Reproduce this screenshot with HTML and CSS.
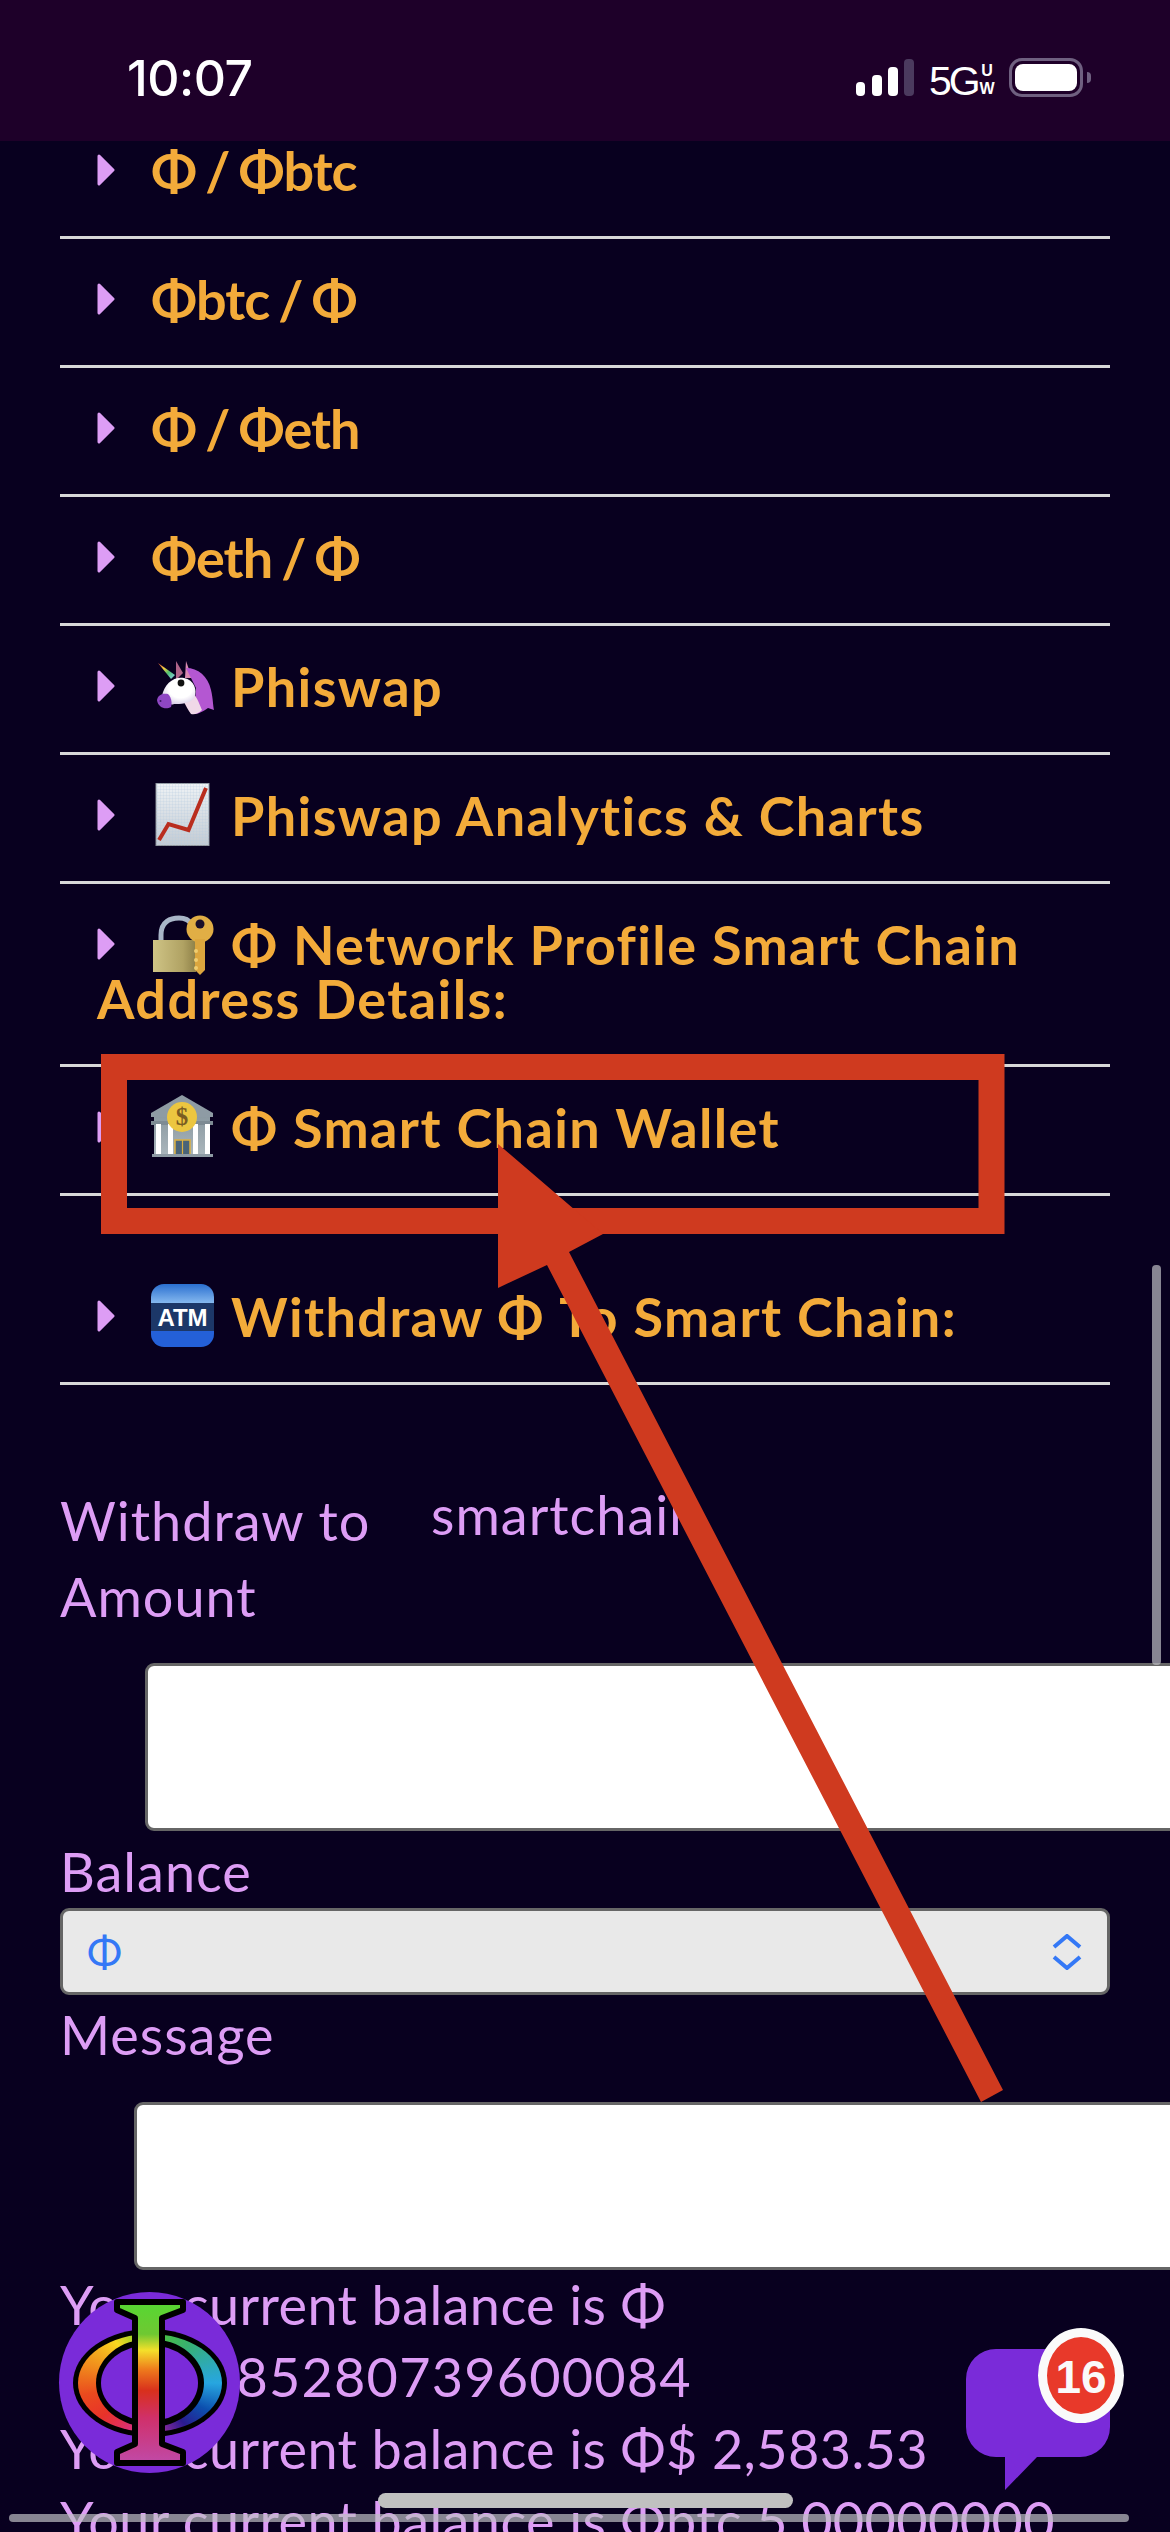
FILE: index.html

```html
<!DOCTYPE html>
<html lang="en">
<head>
  <meta charset="UTF-8">
  <meta name="viewport" content="width=device-width, initial-scale=1.0">
  <title>Smart Chain Wallet</title>
  <link rel="stylesheet" href="styles.css">
</head>
<body>
  <svg class="defs" width="0" height="0">
    <symbol id="tri" viewBox="0 0 18 32">
      <path d="M2 2 L16 16 L2 30 Z" fill="#dd9df5" stroke="#dd9df5" stroke-width="3" stroke-linejoin="round"/>
    </symbol>
  </svg>

  <div class="page">
    <header class="status">
      <span class="time">10:07</span>
      <div class="status-right">
        <svg class="signal" width="58" height="37" viewBox="0 0 58 37">
          <rect x="0" y="23" width="9" height="14" rx="4" fill="#fff"/>
          <rect x="16" y="16" width="10" height="21" rx="4" fill="#fff"/>
          <rect x="32" y="8" width="10" height="29" rx="4" fill="#fff"/>
          <rect x="48" y="0" width="10" height="37" rx="4" fill="#4b3a5e"/>
        </svg>
        <span class="net">5G</span>
        <span class="uw"><span>U</span><span>W</span></span>
        <div class="battery"><div class="battery-fill"></div></div>
        <div class="battery-nub"></div>
      </div>
    </header>

    <main class="content">
      <details class="row first pair">
        <summary><svg class="tri"><use href="#tri"/></svg>Φ / Φbtc</summary>
      </details>
      <details class="row pair">
        <summary><svg class="tri"><use href="#tri"/></svg>Φbtc / Φ</summary>
      </details>
      <details class="row pair">
        <summary><svg class="tri"><use href="#tri"/></svg>Φ / Φeth</summary>
      </details>
      <details class="row pair">
        <summary><svg class="tri"><use href="#tri"/></svg>Φeth / Φ</summary>
      </details>

      <details class="row">
        <summary><svg class="tri"><use href="#tri"/></svg><svg class="emoji" viewBox="0 0 63 63">
            <defs>
              <linearGradient id="horn" x1="0" y1="0" x2="1" y2="1">
                <stop offset="0" stop-color="#e0503a"/><stop offset=".35" stop-color="#f0d040"/>
                <stop offset=".6" stop-color="#50c070"/><stop offset="1" stop-color="#8fd0f0"/>
              </linearGradient>
              <radialGradient id="uni" cx=".55" cy=".4" r=".7">
                <stop offset=".5" stop-color="#fff"/><stop offset="1" stop-color="#cdbfe0"/>
              </radialGradient>
            </defs>
            <g transform="translate(5 6)">
              <path d="M2 3 L19 15 L15 19 Z" fill="url(#horn)"/>
              <path d="M20 20 L20 1 L27 13 Z" fill="#b0648a"/>
              <path d="M29 18 L30 1 L36 18 Z" fill="#d98ab0"/>
              <path d="M30 8 C42 8 52 16 55 30 C57 38 57 46 58 50 L52 48 C46 52 42 54 38 54 L40 28 Z" fill="#b457d2"/>
              <path d="M36 32 C42 38 44 46 46 50 C42 54 38 55 35 54 C32 50 30 46 28 42 Z" fill="#f0d8e8"/>
              <path d="M6 36 C8 24 18 16 28 18 C38 20 42 30 38 38 C34 44 24 44 18 44 C14 46 8 42 6 36 Z" fill="url(#uni)"/>
              <path d="M1 40 C2 34 8 33 12 34 C16 38 16 44 15 47 C10 50 2 48 1 40 Z" fill="#8f47c4"/>
              <circle cx="25" cy="23" r="3.4" fill="#111"/>
              <circle cx="4.500" cy="41" r="1" fill="#3b1a60"/>
            </g>
          </svg>Phiswap</summary>
      </details>

      <details class="row">
        <summary><svg class="tri"><use href="#tri"/></svg><svg class="emoji" viewBox="0 0 63 63">
            <defs>
              <linearGradient id="paper" x1="0" y1="0" x2="0" y2="1">
                <stop offset="0" stop-color="#eef2f5"/><stop offset="1" stop-color="#c3cbd3"/>
              </linearGradient>
              <pattern id="grid" width="3" height="3" patternUnits="userSpaceOnUse">
                <path d="M0 0H3M0 0V3" stroke="#b9cbe0" stroke-width=".5"/>
              </pattern>
            </defs>
            <rect x="5" y="0.500" width="53" height="62" fill="url(#paper)" stroke="#8d949b"/>
            <rect x="5" y="0.500" width="53" height="62" fill="url(#grid)"/>
            <path d="M8 57 L17.500 41 L37.500 47 L55 5" fill="none" stroke="#b92d1e" stroke-width="4"/>
          </svg>Phiswap Analytics &amp; Charts</summary>
      </details>

      <details class="row">
        <summary><svg class="tri"><use href="#tri"/></svg><svg class="emoji" viewBox="0 0 63 63">
            <defs>
              <linearGradient id="brass" x1="0" y1="0" x2="1" y2="0">
                <stop offset="0" stop-color="#cfc486"/><stop offset=".7" stop-color="#b0a263"/><stop offset="1" stop-color="#8e8048"/>
              </linearGradient>
            </defs>
            <g transform="translate(2 3)">
              <path d="M8 28 V20 C8 6 18 3 26 3 C32 3 36 5 38 9" fill="none" stroke="#a9b6c8" stroke-width="5"/>
              <rect x="0" y="25" width="43" height="32" fill="url(#brass)"/>
              <circle cx="47" cy="14" r="13.500" fill="#e1ae45"/>
              <circle cx="47" cy="9" r="4.500" fill="#1a0f2a"/>
              <path d="M42 24 H52 V55 L47 60 L42 55 Z" fill="#dca63e"/>
              <circle cx="43" cy="36" r="2" fill="#f0cd70"/><circle cx="43" cy="45" r="2" fill="#f0cd70"/><circle cx="43" cy="53" r="2" fill="#f0cd70"/>
            </g>
          </svg>Φ Network Profile Smart Chain Address Details:</summary>
      </details>

      <details class="row">
        <summary><svg class="tri"><use href="#tri"/></svg><svg class="emoji" viewBox="0 0 63 63">
            <defs>
              <linearGradient id="stone" x1="0" y1="0" x2="0" y2="1">
                <stop offset="0" stop-color="#8c9aa2"/><stop offset="1" stop-color="#a9b5bb"/>
              </linearGradient>
            </defs>
            <path d="M31 0 L62 18 V22 H0 V18 Z" fill="#8e9ba4"/>
            <rect x="3" y="22" width="56" height="37" fill="url(#stone)"/>
            <rect x="0" y="26" width="62" height="4" fill="#7e8b94"/>
            <rect x="5" y="29" width="5" height="30" fill="#fff"/>
            <rect x="17" y="29" width="5" height="30" fill="#fff"/>
            <rect x="42" y="29" width="5" height="30" fill="#fff"/>
            <rect x="54" y="29" width="5" height="30" fill="#fff"/>
            <rect x="24" y="45" width="15" height="15" fill="#4a6478" stroke="#dcb040" stroke-width="1.500"/>
            <path d="M31.500 45 V60" stroke="#dcb040" stroke-width="1.200"/>
            <rect x="1" y="59" width="61" height="3" fill="#8e9ba4"/>
            <circle cx="31" cy="22" r="15" fill="#ecc640"/>
            <text x="31" y="30" text-anchor="middle" class="coin-mark">$</text>
          </svg>Φ Smart Chain Wallet</summary>
      </details>

      <details class="row spaced">
        <summary><svg class="tri"><use href="#tri"/></svg><svg class="emoji" viewBox="0 0 63 63">
            <defs>
              <linearGradient id="atm-top" x1="0" y1="0" x2="0" y2="1">
                <stop offset="0" stop-color="#2a6fd0"/><stop offset="1" stop-color="#8abcf0"/>
              </linearGradient>
              <clipPath id="atm-clip"><rect width="63" height="63" rx="13"/></clipPath>
            </defs>
            <g clip-path="url(#atm-clip)">
              <rect width="63" height="20" fill="url(#atm-top)"/>
              <rect y="19" width="63" height="28" fill="#1c3768"/>
              <rect y="47" width="63" height="16" fill="#2460d8"/>
            </g>
            <text x="31.500" y="42" text-anchor="middle" class="atm-mark">ATM</text>
          </svg>Withdraw Φ To Smart Chain:</summary>
      </details>

      <form class="withdraw">
        <div class="to-line">
          <label class="to-label">Withdraw to</label>
          <span class="to-value">smartchain</span>
        </div>
        <label class="field-label">Amount</label>
        <input class="box amount" type="text">
        <label class="field-label">Balance</label>
        <div class="select-wrap">
          <select class="coin"><option>Φ</option></select>
          <svg class="updown" width="32" height="36" viewBox="0 0 32 36">
            <path d="M3 13 L16 2 L29 13 M3 23 L16 34 L29 23" fill="none" stroke="#3478f6" stroke-width="4"/>
          </svg>
        </div>
        <label class="field-label">Message</label>
        <input class="box message" type="text">
      </form>

      <div class="balances">
        <p>Your current balance is Φ</p>
        <p class="amount-line">10000.85280739600084</p>
        <p>Your current balance is Φ$ 2,583.53</p>
        <p>Your current balance is Φbtc 5.00000000</p>
      </div>
    </main>

    <!-- floating logo, bottom left -->
    <div class="logo">
      <div class="ring-edge">
        <div class="ring-colour">
          <div class="hole-edge">
            <div class="hole"></div>
          </div>
        </div>
      </div>
      <svg class="logo-stem" width="181" height="181" viewBox="0 0 181 181">
        <defs>
          <linearGradient id="stem" x1="0" y1="0" x2="0" y2="1">
            <stop offset="0" stop-color="#56d832"/>
            <stop offset=".2" stop-color="#6fc832"/>
            <stop offset=".3" stop-color="#f4e02a"/>
            <stop offset=".42" stop-color="#ee7a1c"/>
            <stop offset=".55" stop-color="#d8301c"/>
            <stop offset=".72" stop-color="#d0306a"/>
            <stop offset="1" stop-color="#c04aa8"/>
          </linearGradient>
        </defs>
        <path d="M58 10 H124 V18 L103 26 V152 L124 160 V171 H58 V160 L76 152 V26 L58 18 Z" fill="url(#stem)" stroke="#000" stroke-width="6" stroke-linejoin="round"/>
      </svg>
    </div>

    <!-- chat button with unread badge -->
    <div class="chat">
      <svg class="chat-bubble" width="144" height="141" viewBox="0 0 144 141">
        <path d="M30 0 H114 A30 30 0 0 1 144 30 V78 A30 30 0 0 1 114 108 H71 L39 141 V108 H30 A30 30 0 0 1 0 78 V30 A30 30 0 0 1 30 0 Z" fill="#7a2bd9"/>
      </svg>
      <div class="badge">16</div>
    </div>

    <div class="home-bar"></div>
    <div class="scroll-x"></div>
    <div class="scroll-y"></div>

    <!-- red markup drawn on top of the screenshot -->
    <svg class="markup" width="1170" height="2532" viewBox="0 0 1170 2532">
      <rect x="114" y="1067" width="877.500" height="154" fill="none" stroke="#cf3a1f" stroke-width="26"/>
      <path d="M498 1144 L603 1234 L569 1252 L1003 2090 L981 2102 L547 1265 L498 1288 Z" fill="#cf3a1f"/>
    </svg>
  </div>
</body>
</html>
```

FILE: styles.css

```css
* {
  box-sizing: border-box;
}
body {
  margin: 0;
  padding: 0;
  background-color: #08001f;
  font-family: Lato, "Noto Sans", sans-serif;
}
.defs {
  position: absolute;
}
.page {
  position: relative;
  width: 1170px;
  height: 2532px;
  overflow: hidden;
  background-color: #08001f;
  color: #dd9df5;
}

/* status bar */
.status {
  display: flex;
  justify-content: space-between;
  align-items: flex-start;
  height: 141px;
  padding: 51px 79px 0 127px;
  background-color: #1e0029;
  color: #fff;
}
.time {
  font-family: Inter, sans-serif;
  font-size: 50px;
  font-weight: 500;
  line-height: 54px;
  letter-spacing: -0.5px;
}
.status-right {
  display: flex;
  align-items: flex-start;
}
.signal {
  margin-top: 8px;
}
.net {
  width: 48px;
  margin-left: 15px;
  margin-top: 7px;
  font-family: "Liberation Sans", sans-serif;
  font-size: 41px;
  line-height: 46px;
  letter-spacing: -3px;
}
.uw {
  display: flex;
  flex-direction: column;
  align-items: center;
  width: 16px;
  margin-left: 2px;
  margin-top: 11px;
  font-family: "Liberation Sans", sans-serif;
  font-size: 16px;
  font-weight: 700;
  line-height: 18px;
}
.battery {
  width: 74px;
  height: 39px;
  margin-left: 14px;
  margin-top: 7px;
  padding: 3px;
  border: 3px solid #6f6080;
  border-radius: 13px;
}
.battery-fill {
  height: 100%;
  background-color: #fff;
  border-radius: 8px;
}
.battery-nub {
  width: 4px;
  height: 11px;
  margin-left: 4px;
  margin-top: 21px;
  background-color: #6f6080;
  border-radius: 0 6px 6px 0;
}

/* collapsed rows */
.row {
  margin: 0 60px;
  border-bottom: 3px solid #d8d8d8;
}
summary {
  display: block;
  padding: 34px 0 38px 37px;
  font-size: 54px;
  font-weight: 700;
  line-height: 54px;
  letter-spacing: 1.400px;
  color: #f3ab3a;
  list-style: none;
}
.first summary {
  padding-top: 3px;
}
.spaced summary {
  padding-top: 94px;
}
.pair summary {
  letter-spacing: -1px;
  word-spacing: -3px;
}
.tri {
  display: inline-block;
  width: 18px;
  height: 32px;
  margin-right: 36px;
  vertical-align: 5px;
}
.emoji {
  display: inline-block;
  width: 63px;
  height: 63px;
  margin: -20px 17px -20px 0;
  vertical-align: 10px;
}
.coin-mark {
  font-family: "Liberation Serif", serif;
  font-size: 25px;
  font-weight: 700;
  letter-spacing: 0;
  fill: #7a5c22;
}
.atm-mark {
  font-family: "Liberation Sans", sans-serif;
  font-size: 24px;
  font-weight: 700;
  letter-spacing: 0;
  fill: #fff;
}

/* withdraw form */
.withdraw {
  padding: 0 60px;
  margin-top: 96px;
  font-size: 54px;
  font-weight: 400;
  letter-spacing: 1px;
}
.to-line {
  display: flex;
  align-items: flex-start;
  height: 76px;
}
.to-label {
  width: 371px;
  padding-top: 3px;
  line-height: 73px;
}
.to-value {
  padding-top: 2px;
  line-height: 64px;
}
.field-label {
  display: block;
  padding-top: 3px;
  line-height: 73px;
}
.box {
  display: block;
  height: 168px;
  width: 1300px;
  background-color: #fff;
  border: 3px solid #666;
  border-radius: 9px;
}
.amount {
  margin-left: 85px;
  margin-top: 30px;
  margin-bottom: 1px;
}
.message {
  margin-left: 74px;
  margin-top: 31px;
}
.select-wrap {
  position: relative;
}
.coin {
  display: block;
  width: 100%;
  height: 87px;
  padding: 0 24px;
  appearance: none;
  background-color: #e9e9e9;
  border: 3px solid #666;
  border-radius: 9px;
  color: #3478f6;
  font-family: inherit;
  font-size: 42px;
}
.updown {
  position: absolute;
  right: 27px;
  top: 26px;
}

/* balance lines */
.balances {
  padding: 0 60px;
  margin-top: -1px;
  font-size: 54px;
  font-weight: 400;
  line-height: 72px;
  letter-spacing: 0.400px;
  white-space: nowrap;
}
.balances p {
  margin: 0;
}
.balances .amount-line {
  letter-spacing: 1.200px;
}

/* floating bits */
.logo {
  position: absolute;
  left: 59px;
  top: 2292px;
  display: flex;
  align-items: center;
  justify-content: center;
  width: 181px;
  height: 181px;
  background-color: #7a2bd9;
  border-radius: 50%;
}
.ring-edge {
  display: flex;
  align-items: center;
  justify-content: center;
  width: 154px;
  height: 108px;
  background-color: #000;
  border-radius: 50%;
}
.ring-colour {
  display: flex;
  align-items: center;
  justify-content: center;
  width: 144px;
  height: 98px;
  border-radius: 50%;
  background: conic-gradient(#52c82e 0deg, #38b070 45deg, #27a6e0 90deg, #0c4fae 115deg, #2a1a90 140deg, #8a2a9c 165deg, #d82f8a 195deg, #e8322a 235deg, #ea4a1e 260deg, #f08a1c 285deg, #f8d820 320deg, #52c82e 360deg);
}
.hole-edge {
  display: flex;
  align-items: center;
  justify-content: center;
  width: 108px;
  height: 88px;
  background-color: #000;
  border-radius: 50%;
}
.hole {
  width: 97px;
  height: 76px;
  background-color: #7a2bd9;
  border-radius: 50%;
}
.logo-stem {
  position: absolute;
  left: 0;
  top: 0;
}
.chat {
  position: absolute;
  left: 966px;
  top: 2328px;
  width: 158px;
  height: 162px;
}
.chat-bubble {
  position: absolute;
  left: 0;
  top: 21px;
}
.badge {
  position: absolute;
  left: 72px;
  top: 0;
  width: 86px;
  height: 95px;
  padding-top: 11px;
  border: 9px solid #fafafa;
  border-radius: 50%;
  background-color: #e8392a;
  color: #fafafa;
  font-family: "Liberation Sans", sans-serif;
  font-size: 46px;
  font-weight: 700;
  line-height: 58px;
  text-align: center;
}
.home-bar {
  position: absolute;
  left: 378px;
  top: 2493px;
  width: 415px;
  height: 15px;
  background-color: #c0c0c0;
  border-radius: 8px;
}
.scroll-x {
  position: absolute;
  left: 9px;
  top: 2514px;
  width: 1120px;
  height: 8px;
  background-color: rgba(190, 190, 195, 0.7);
  border-radius: 4px;
}
.scroll-y {
  position: absolute;
  left: 1152px;
  top: 1265px;
  width: 9px;
  height: 400px;
  background-color: rgba(190, 190, 195, 0.7);
  border-radius: 4px;
}
.markup {
  position: absolute;
  left: 0;
  top: 0;
}
```
